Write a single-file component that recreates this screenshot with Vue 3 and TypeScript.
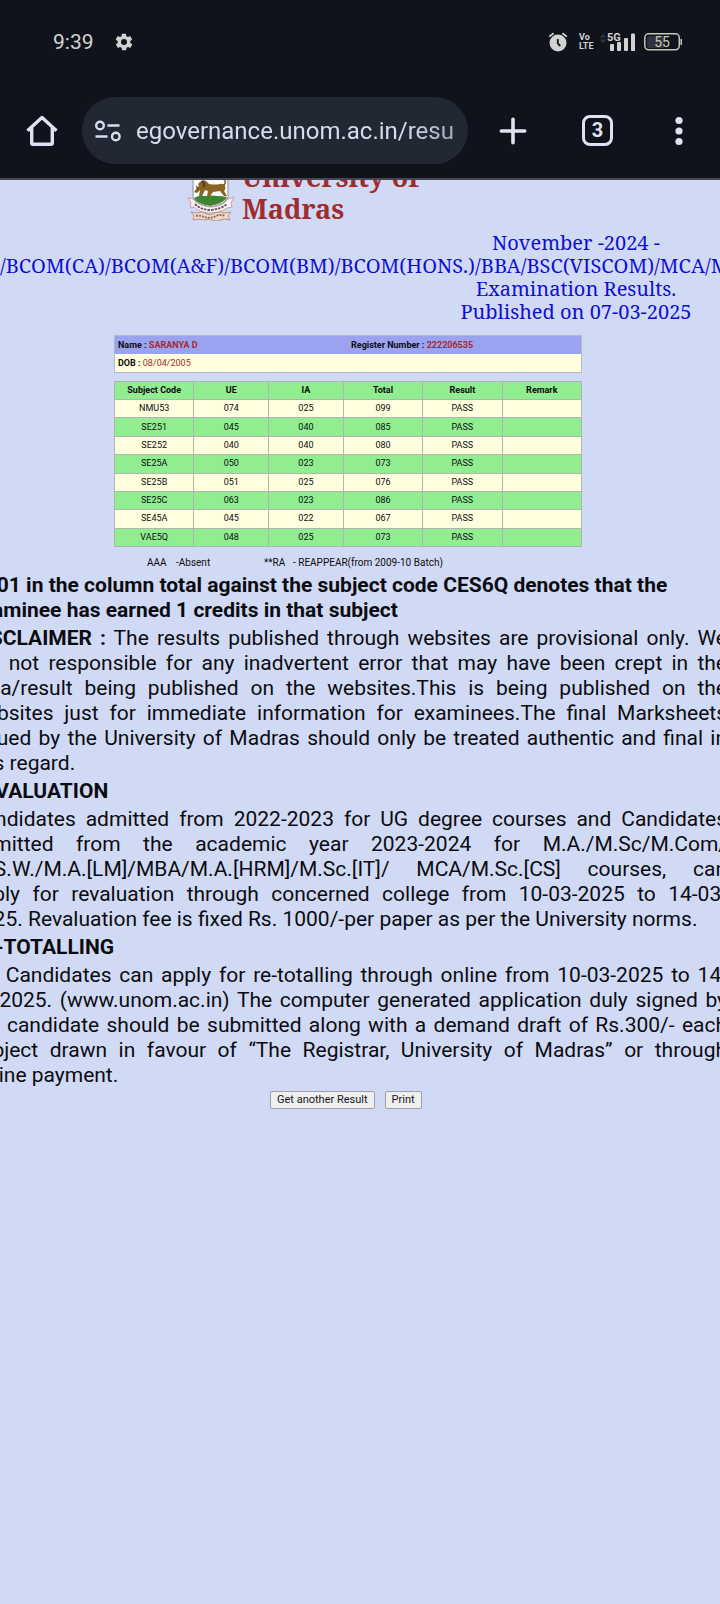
<script setup lang="ts">
import { ref } from 'vue'

interface SubjectResult {
  code: string
  ue: string
  ia: string
  total: string
  result: string
  remark: string
}

const address = ref('egovernance.unom.ac.in/resu')

const columns: string[] = ['Subject Code', 'UE', 'IA', 'Total', 'Result', 'Remark']

const subjects: SubjectResult[] = [
  { code: 'NMU53', ue: '074', ia: '025', total: '099', result: 'PASS', remark: '' },
  { code: 'SE251', ue: '045', ia: '040', total: '085', result: 'PASS', remark: '' },
  { code: 'SE252', ue: '040', ia: '040', total: '080', result: 'PASS', remark: '' },
  { code: 'SE25A', ue: '050', ia: '023', total: '073', result: 'PASS', remark: '' },
  { code: 'SE25B', ue: '051', ia: '025', total: '076', result: 'PASS', remark: '' },
  { code: 'SE25C', ue: '063', ia: '023', total: '086', result: 'PASS', remark: '' },
  { code: 'SE45A', ue: '045', ia: '022', total: '067', result: 'PASS', remark: '' },
  { code: 'VAE5Q', ue: '048', ia: '025', total: '073', result: 'PASS', remark: '' },
]
</script>

<template>
  <div class="screen">
    <header class="chrome">
      <div class="status">
        <span class="clock">9:39</span>
        <svg class="gear" width="20" height="20" viewBox="0 0 24 24" fill="#d2d2d2">
          <path d="M19.4 13a7.5 7.5 0 0 0 0-2l2.1-1.6c.2-.2.3-.5.1-.7l-2-3.5c-.1-.2-.4-.3-.6-.2l-2.5 1a7.3 7.3 0 0 0-1.7-1l-.4-2.6c0-.3-.2-.4-.5-.4h-4c-.2 0-.4.1-.5.4l-.4 2.6c-.6.3-1.2.6-1.7 1l-2.5-1c-.2-.1-.5 0-.6.2l-2 3.5c-.1.2-.1.5.1.7L4.600 11a7.5 7.5 0 0 0 0 2l-2.1 1.600c-.2.2-.3.5-.1.7l2 3.500c.1.2.4.3.6.2l2.5-1c.5.4 1.100.7 1.700 1l.4 2.600c.1.3.3.4.5.4h4c.3 0 .5-.1.5-.4l.4-2.600c.6-.3 1.200-.6 1.700-1l2.500 1c.2.1.5 0 .6-.2l2-3.500c.1-.2.1-.5-.1-.7zM12 15.600a3.600 3.600 0 1 1 0-7.200 3.600 3.600 0 0 1 0 7.200z" />
        </svg>
        <div class="status-right">
          <svg class="alarm" width="20" height="20" viewBox="0 0 20 20">
            <circle cx="10" cy="11" r="8.5" fill="#d2d2d2" />
            <path d="M1.2 4.600 5.600 1.200M18.800 4.600 14.400 1.200" stroke="#d2d2d2" stroke-width="1.800" fill="none" />
            <path d="M9.800 7v4.500l2.500 2.500" stroke="#10131c" stroke-width="1.800" fill="none" />
          </svg>
          <span class="volte"><span>Vo</span><span>LTE</span></span>
          <svg class="signal" width="36" height="20" viewBox="0 0 36 20">
            <path d="M0 5.500 3 2l3 3.500zM0 7.500 3 11l3-3.500z" fill="#34373d" />
            <text x="7" y="9" class="signal-label">5G</text>
            <g fill="#d2d2d2">
              <rect x="10" y="12" width="4" height="7" rx="1" />
              <rect x="17" y="10" width="4" height="9" rx="1" />
              <rect x="24" y="6" width="4" height="13" rx="1" />
              <rect x="31" y="1.500" width="4" height="17.500" rx="1" />
            </g>
          </svg>
          <svg class="battery" width="39" height="18" viewBox="0 0 39 18">
            <rect x="3" y="3" width="18" height="12" rx="2" fill="#2f3239" />
            <rect x="0.800" y="0.800" width="34.500" height="16" rx="4" fill="none" stroke="#c5c8bd" stroke-width="1.500" />
            <path d="M36.500 6h1.500v6h-1.500z" fill="#c5c8bd" />
            <text x="18" y="14" class="battery-label">55</text>
          </svg>
        </div>
      </div>
      <nav class="toolbar">
        <button class="tool" type="button" aria-label="Home">
          <svg width="32" height="32" viewBox="0 0 32 32" fill="none" stroke="#dfe2f2" stroke-width="3.400">
            <path d="M1.500 15.800 16 2.600 30.500 15.800" stroke-linejoin="round" />
            <path d="M5.700 13v14.800q0 1.500 1.500 1.500h17.600q1.500 0 1.500-1.500V13" />
          </svg>
        </button>
        <div class="omnibox">
          <button class="tool" type="button" aria-label="Site information">
            <svg width="26" height="22" viewBox="0 0 26 22" fill="none" stroke="#d9dcec" stroke-width="2.400">
              <circle cx="5" cy="5.500" r="3.800" />
              <circle cx="20.800" cy="16.500" r="3.800" />
              <path d="M12.500 5.500h12M.5 16.500h12" />
            </svg>
          </button>
          <input v-model="address" class="address" type="text" aria-label="Address" />
        </div>
        <button class="tool" type="button" aria-label="New tab">
          <svg width="28" height="28" viewBox="0 0 28 28" stroke="#dfe2f2" stroke-width="3.600" stroke-linecap="round">
            <path d="M14 2.300v23.400M2.300 14h23.400" />
          </svg>
        </button>
        <button class="tabs" type="button" aria-label="Open tabs">3</button>
        <button class="tool" type="button" aria-label="Menu">
          <svg width="8" height="30" viewBox="0 0 8 30" fill="#dfe2f2">
            <circle cx="4" cy="4.500" r="3.600" />
            <circle cx="4" cy="15" r="3.600" />
            <circle cx="4" cy="25.500" r="3.600" />
          </svg>
        </button>
      </nav>
    </header>

    <main class="page">
      <div class="brand">
        <svg class="crest" width="46" height="60" viewBox="0 0 46 60">
          <path d="M5 4h35v32q-2 7-17.500 10Q7 43 5 36z" fill="#fbfcfa" stroke="#7f8a80" stroke-width="0.900" />
          <path d="M6 37q5-3 11-2 8-1 12 0 6 0 10 1-2 6-16.500 9Q9 43 6 37z" fill="#3d8530" />
          <path d="M12 21q3-3 6-1 2 2 3 3 6 1 11 0 4-1 5 2 1 3-1 5l3 5h-3l-4-5-7 1-3 4h-3l1-5-3-1-3 6h-3l1-6-3 3-3-1 3-4 2-2q-2-2 1-4z" fill="#8c6324" />
          <path d="M10 29 8.500 25M36 24q3-4-1-6" stroke="#63451a" stroke-width="1.300" fill="none" />
          <path d="M14 20q3 2 2 6" stroke="#4d3616" stroke-width="1.600" fill="none" />
          <path d="M0 36.500 5 38q6 7 17 8 12 0 18-8l6-2-3 6 1 4-5 1q-7 5-18 5-10-1-15-6l-4 0 1-4z" fill="#f8f3f6" stroke="#cf8f9f" stroke-width="0.900" />
          <path d="M7 43q6 6 16 6 10-1 16-6" stroke="#5d5560" stroke-width="1.800" stroke-dasharray="2.500 1" fill="none" />
          <path d="M3 51l6 1q5-2 9 1 5 2 9-1 6-2 9 0l7-1-3 4 2 4-6-1-7 2q-6-1-8-2-5 2-9 0l-7 1 1-4z" fill="#e9d9d2" stroke="#b98461" stroke-width="0.800" />
          <path d="M8 55q5-1 8 1 6 2 12-1 5-2 9 0" stroke="#94694e" stroke-width="1.800" stroke-dasharray="2 1" fill="none" />
        </svg>
        <h1>University of<br />Madras</h1>
      </div>

      <section class="exam">
        <p class="exam-side">November -2024 -</p>
        <p class="exam-wide">/BCOM(CA)/BCOM(A&amp;F)/BCOM(BM)/BCOM(HONS.)/BBA/BSC(VISCOM)/MCA/MSC</p>
        <p class="exam-side">Examination Results.</p>
        <p class="exam-side">Published on 07-03-2025</p>
      </section>

      <div class="sheet">
        <table class="student">
          <colgroup><col class="half" /><col class="half" /></colgroup>
          <tbody>
            <tr class="lead">
              <td><b>Name : <em>SARANYA D</em></b></td>
              <td><b>Register Number : <em>222206535</em></b></td>
            </tr>
            <tr>
              <td colspan="2"><b>DOB : </b><em>08/04/2005</em></td>
            </tr>
          </tbody>
        </table>

        <table class="marks">
          <colgroup><col class="c-code" /><col class="c-mark" /><col class="c-mark" /><col class="c-total" /><col class="c-total" /><col class="c-remark" /></colgroup>
          <thead>
            <tr>
              <th v-for="name in columns" :key="name" scope="col">{{ name }}</th>
            </tr>
          </thead>
          <tbody>
            <tr v-for="s in subjects" :key="s.code">
              <td>{{ s.code }}</td>
              <td>{{ s.ue }}</td>
              <td>{{ s.ia }}</td>
              <td>{{ s.total }}</td>
              <td>{{ s.result }}</td>
              <td>{{ s.remark }}</td>
            </tr>
          </tbody>
        </table>

        <p class="legend">
          <span class="key">AAA</span><span class="absent">-Absent</span>
          <span class="key">**RA</span><span>- REAPPEAR(from 2009-10 Batch)</span>
        </p>
      </div>

      <article class="notes">
        <p class="strong">* 001 in the column total against the subject code CES6Q denotes that the examinee has earned 1 credits in that subject</p>
        <p><b>DISCLAIMER :</b> The results published through websites are provisional only. We are not responsible for any inadvertent error that may have been crept in the data/result being published on the websites.This is being published on the websites just for immediate information for examinees.The final Marksheets issued by the University of Madras should only be treated authentic and final in this regard.</p>
        <h2>REVALUATION</h2>
        <p>Candidates admitted from 2022-2023 for UG degree courses and Candidates admitted from the academic year 2023-2024 for M.A./M.Sc/M.Com/ M.S.W./M.A.[LM]/MBA/M.A.[HRM]/M.Sc.[IT]/ MCA/M.Sc.[CS] courses, can apply&nbsp;for revaluation through concerned college from 10-03-2025 to 14-03-<wbr />2025.&nbsp;Revaluation fee is fixed Rs. 1000/-per paper as per the University norms.</p>
        <h2>RE-TOTALLING</h2>
        <p>UG Candidates can apply for re-totalling through online from 10-03-2025 to 14-03-2025. (www.unom.ac.in) The computer generated application duly signed by the candidate should be submitted along with a demand draft of Rs.300/- each subject drawn in favour of “The Registrar, University of Madras” or through online&nbsp;payment.</p>
      </article>

      <div class="actions">
        <button type="button">Get another Result</button>
        <button type="button">Print</button>
      </div>
    </main>
  </div>
</template>

<style>
body {
  background: #d1daf5;
}
</style>

<style scoped>
.screen {
  min-height: 100vh;
  overflow: hidden;
  background: #d1daf5;
  font-family: Roboto, "Liberation Sans", sans-serif;
  color: #0b0c10;
}
p, h1, h2 {
  margin: 0;
}
button {
  font-family: inherit;
}
.chrome {
  background: #10131c;
  border-bottom: 2px solid #44474f;
}
.status {
  display: flex;
  align-items: center;
  height: 97px;
  padding: 0 37px 14px 53px;
  box-sizing: border-box;
  color: #d2d2d2;
}
.clock {
  font-size: 21px;
  width: 61px;
}
.status-right {
  display: flex;
  align-items: center;
  margin-left: auto;
}
.volte {
  display: flex;
  flex-direction: column;
  width: 14px;
  margin: 0 7px 0 11px;
  font-size: 9px;
  line-height: 9px;
  font-weight: 700;
}
.signal-label {
  font-size: 11px;
  font-weight: 700;
  fill: #d2d2d2;
}
.battery {
  margin-left: 8px;
}
.battery-label {
  font-size: 14px;
  text-anchor: middle;
  fill: #c5c8bd;
}
.toolbar {
  display: flex;
  align-items: center;
  height: 67px;
  padding: 0 37px 0 26px;
  margin-bottom: 14px;
}
.tool {
  display: flex;
  padding: 0;
  border: 0;
  background: none;
}
.omnibox {
  display: flex;
  flex: 1;
  align-items: center;
  gap: 15px;
  height: 67px;
  margin: 0 31px 0 24px;
  padding: 0 13px;
  border-radius: 34px;
  background: #222734;
  box-sizing: border-box;
}
.address {
  flex: 1;
  min-width: 0;
  padding: 0;
  border: 0;
  background: none;
  color: #d9dcec;
  font-family: Roboto, "Liberation Sans", sans-serif;
  font-size: 24px;
  mask-image: linear-gradient(to right, #000 84%, rgba(0, 0, 0, 0.7));
}
.tabs {
  width: 31px;
  height: 31px;
  margin: 0 62px 0 55px;
  padding: 0;
  border: 3px solid #dfe2f2;
  border-radius: 8px;
  background: none;
  color: #dfe2f2;
  font-size: 20px;
  line-height: 25px;
  font-weight: 700;
}
.page {
  overflow: hidden;
}
.brand {
  display: flex;
  align-items: flex-end;
  gap: 8px;
  margin: -19px 0 0 188px;
}
.crest {
  margin-bottom: 4px;
}
h1 {
  font-family: "Noto Serif", "DejaVu Serif", serif;
  font-size: 27px;
  line-height: 32px;
  color: #9f2c2f;
}
.exam {
  display: grid;
  margin-top: 6px;
  font-family: "Noto Serif", "Liberation Serif", serif;
  font-size: 20px;
  line-height: 23px;
  color: #0f0fd0;
  white-space: nowrap;
}
.exam-side {
  width: 40%;
  justify-self: end;
  text-align: center;
}
.exam-wide {
  width: 0;
}
.sheet {
  width: 65%;
  margin: 12px 0 0 114px;
  font-size: 9px;
}
table {
  width: 100%;
  table-layout: fixed;
  border-collapse: collapse;
}
th, td {
  padding: 0;
  line-height: 17px;
}
em {
  font-style: normal;
  color: #a52a2a;
}
.student {
  height: 38px;
  border: 1px solid #b4b7c4;
  background: #ffffe0;
}
.student td {
  padding-left: 3px;
}
.lead {
  background: #9ba3f1;
}
.marks {
  height: 166px;
  margin-top: 8px;
  text-align: center;
}
.marks th, .marks td {
  border: 1px solid #b0b5ae;
}
.marks thead tr, .marks tbody tr:nth-child(even) {
  background: #90ee90;
}
.marks tbody tr:nth-child(odd) {
  background: #ffffe0;
}
.c-code {
  width: 17%;
}
.c-mark {
  width: 16%;
}
.c-total {
  width: 17%;
}
.c-remark {
  width: 17%;
}
.legend {
  display: flex;
  margin: 9px 0 0 33px;
  font-size: 10px;
  line-height: 14px;
}
.key {
  width: 29px;
}
.absent {
  width: 88px;
}
.notes {
  margin: 3px -7px 0 -30px;
  display: grid;
  gap: 3px;
  font-size: 21px;
  line-height: 25px;
}
.notes p {
  text-align: justify;
}
.notes .strong {
  font-weight: 700;
  text-align: left;
}
h2 {
  font-size: 21px;
  line-height: 25px;
}
.actions {
  display: flex;
  gap: 10px;
  margin: 3px 0 0 270px;
}
.actions button {
  height: 18px;
  padding: 0 6px;
  border: 1px solid #9d9fab;
  border-radius: 2px;
  background: #efefef;
  color: #16171b;
  font-size: 11px;
  line-height: 16px;
}
</style>
